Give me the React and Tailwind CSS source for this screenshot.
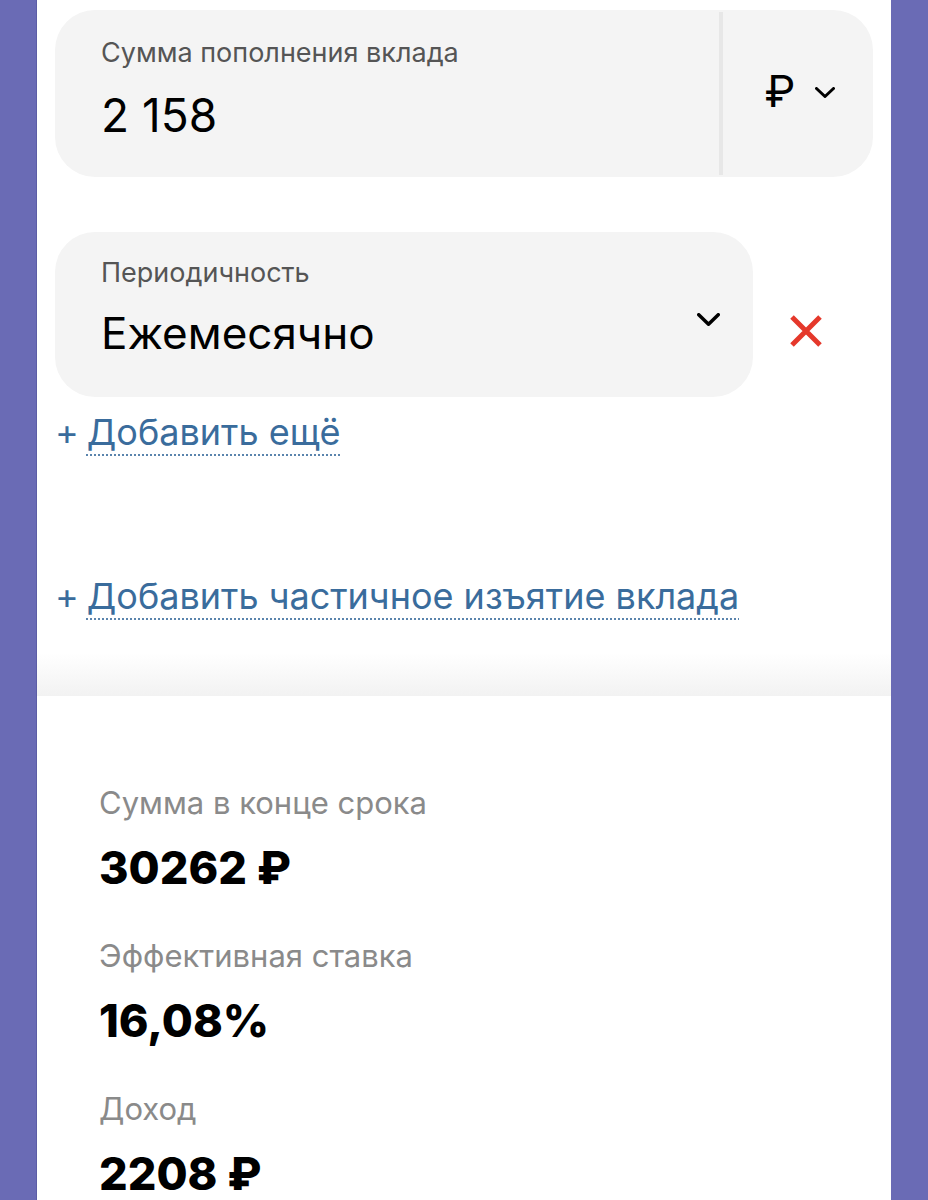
const RESULTS = [
  { label: 'Сумма в конце срока', value: '30262 ₽' },
  { label: 'Эффективная ставка', value: '16,08%' },
  { label: 'Доход', value: '2208 ₽' },
];

function Chevron({ className, w = 20, h = 11, sw = 3 }) {
  return (
    <svg width={w} height={h} viewBox={`0 0 ${w} ${h}`} className={className}>
      <polyline
        points={`${sw / 2},${sw / 2} ${w / 2},${h - sw / 2} ${w - sw / 2},${sw / 2}`}
        fill="none"
        stroke="black"
        strokeWidth={sw}
        strokeLinecap="round"
        strokeLinejoin="round"
      />
    </svg>
  );
}

function AddLink({ text, className }) {
  return (
    <div className={`flex items-baseline text-[36px] leading-[40px] text-[#3a6c9c] ${className}`}>
      <span className="mr-[8px]">+</span>
      <span className="underline decoration-dotted decoration-[2px] underline-offset-[9px] decoration-[#5a84ad]">
        {text}
      </span>
    </div>
  );
}

export default function App() {
  return (
    <div
      className="min-h-screen bg-[#6a6bb5] pl-[36px] pr-[37px]"
      style={{ fontFamily: 'Inter, "Noto Sans", sans-serif' }}
    >
      <div className="bg-white h-[1200px] flex flex-col border-l border-[#5c5da6]">
        {/* top form */}
        <div className="pt-[10px] pl-[18px] pr-[18px]">
          <div className="h-[167px] rounded-[40px] bg-[#f4f4f4] flex">
            <div className="flex-1 pl-[46px] pt-[28px]">
              <p className="text-[27px] leading-[30px] text-[#555555]">Сумма пополнения вклада</p>
              <p className="mt-[22px] text-[46px] leading-[50px] text-black">2 158</p>
            </div>
            <div className="w-[4px] my-[2px] bg-[#e7e7e7]" />
            <div className="w-[150px] flex items-center justify-center gap-[20px] pl-[4px] pb-[6px]">
              <span className="text-[44px] leading-none text-black">₽</span>
              <Chevron className="mt-[4px]" w={20} h={11} sw={3} />
            </div>
          </div>

          <div className="mt-[55px] flex items-center">
            <div className="w-[698px] h-[165px] rounded-[40px] bg-[#f4f4f4] flex items-start pl-[46px] pr-[33px] pt-[26px]">
              <div className="flex-1">
                <p className="text-[27px] leading-[30px] text-[#555555]">Периодичность</p>
                <p className="mt-[20px] text-[44px] leading-[50px] text-black">Ежемесячно</p>
              </div>
              <Chevron className="mt-[55px]" w={23} h={13} sw={3.5} />
            </div>
            <div className="flex-1 flex justify-center pt-[32px] pr-[14px]">
              <svg width="34" height="34" viewBox="0 0 34 34">
                <path d="M3 3 L31 31 M31 3 L3 31" stroke="#e5382b" strokeWidth="5" strokeLinecap="butt" />
              </svg>
            </div>
          </div>

          <AddLink text="Добавить ещё" className="mt-[15px]" />
          <AddLink text="Добавить частичное изъятие вклада" className="mt-[124px]" />
        </div>

        <div className="mt-[37px] h-[45px] bg-gradient-to-b from-white to-[#f2f2f2]" />

        {/* results */}
        <div className="flex-1 bg-white pl-[62px] pt-[89px]">
          {RESULTS.map((r, i) => (
            <div key={r.label} className={i > 0 ? 'mt-[44px]' : ''}>
              <p className="text-[31px] leading-[36px] text-[#8a8a8a]">{r.label}</p>
              <p className="mt-[21px] text-[45px] leading-[52px] font-extrabold text-black">{r.value}</p>
            </div>
          ))}
        </div>
      </div>
    </div>
  );
}
